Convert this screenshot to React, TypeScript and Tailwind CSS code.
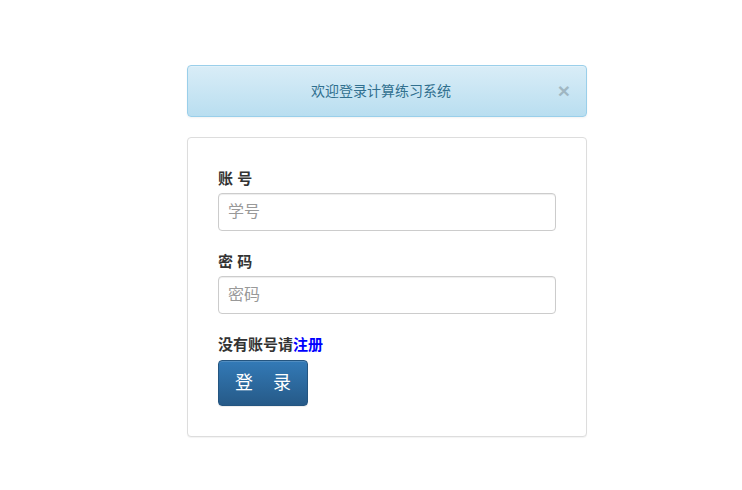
import React from "react";

export default function App() {
  const font = { fontFamily: '"Liberation Sans", "Noto Sans CJK SC", sans-serif' };
  return (
    <div className="w-[742px] h-[490px] bg-white" style={font}>
      <div className="w-[400px] ml-[187px] pt-[65px]">
        <div className="relative h-[52px] rounded-[4px] border border-[#9acfea] bg-gradient-to-b from-[#d9edf7] to-[#b9def0] flex items-center justify-center pr-[12px] text-[14px] text-[#31708f] shadow-[inset_0_1px_0_rgba(255,255,255,0.25),0_1px_2px_rgba(0,0,0,0.05)]">
          <span className="leading-[20px]">欢迎登录计算练习系统</span>
          <span className="absolute right-[16px] top-[13px] text-[21px] font-bold leading-[24px] text-[#000] opacity-20">×</span>
        </div>
        <div className="mt-[20px] h-[300px] rounded-[4px] border border-[#ddd] bg-white shadow-[0_1px_1px_rgba(0,0,0,0.05)] px-[30px] pt-[31px]">
          <div className="text-[15px] font-bold text-[#333] leading-[20px]">账 号</div>
          <div className="mt-[4px] h-[38px] w-[338px] rounded-[4px] border border-[#ccc] shadow-[inset_0_1px_1px_rgba(0,0,0,0.075)] flex items-center px-[9px] text-[16px] text-[#999]">学号</div>
          <div className="mt-[21px] text-[15px] font-bold text-[#333] leading-[20px]">密 码</div>
          <div className="mt-[4px] h-[38px] w-[338px] rounded-[4px] border border-[#ccc] shadow-[inset_0_1px_1px_rgba(0,0,0,0.075)] flex items-center px-[9px] text-[16px] text-[#999]">密码</div>
          <div className="mt-[21px] text-[15px] font-bold text-[#333] leading-[20px]">
            没有账号请<span className="text-[#0000ff]">注册</span>
          </div>
          <div className="mt-[5px] h-[46px] w-[90px] rounded-[4px] border border-[#245580] bg-gradient-to-b from-[#337ab7] to-[#265a88] flex items-center justify-center text-white text-[18px] leading-[24px] shadow-[inset_0_1px_0_rgba(255,255,255,0.15),0_1px_1px_rgba(0,0,0,0.075)]">
            登&nbsp;&nbsp;&nbsp;&nbsp;录
          </div>
        </div>
      </div>
    </div>
  );
}
